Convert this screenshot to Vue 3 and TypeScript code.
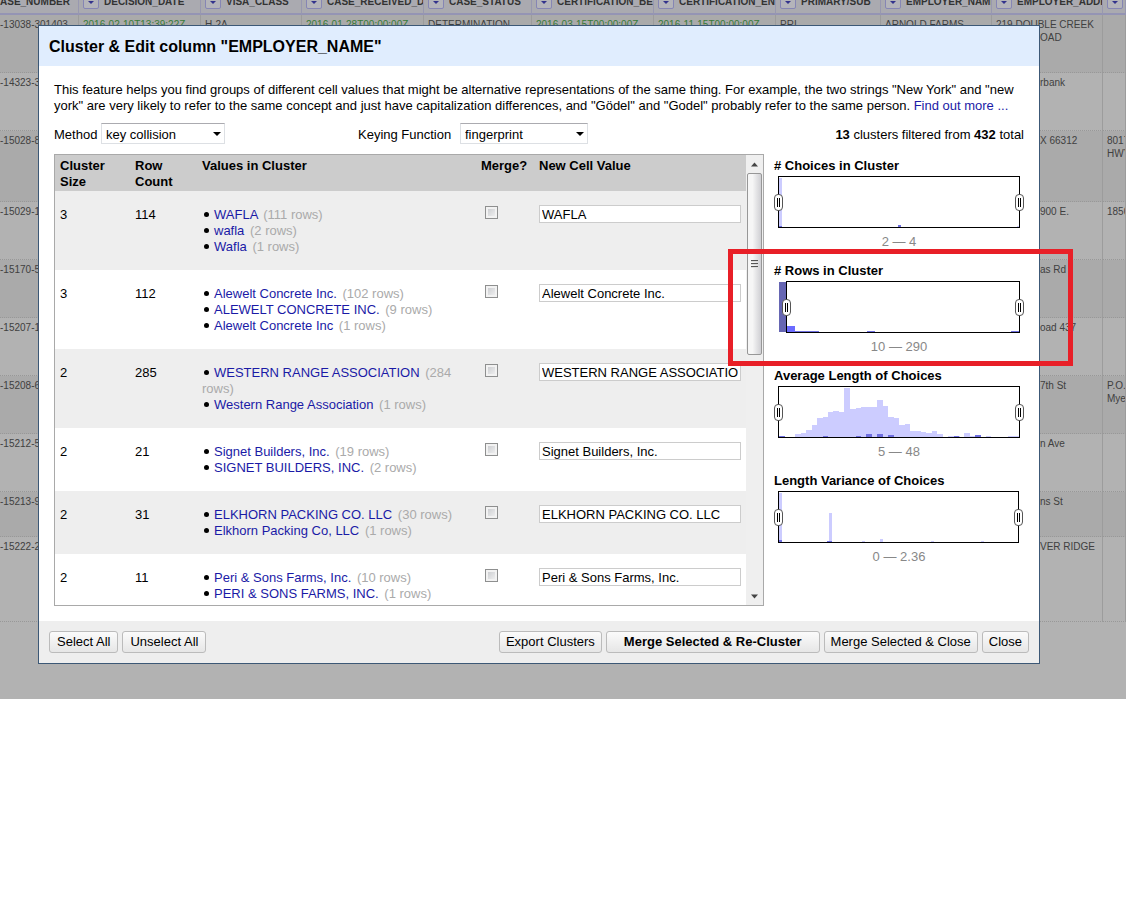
<script setup lang="ts">
import { ref } from 'vue'

interface GridColumn {
  name: string
  menu: boolean
}
interface GridRow {
  size: string
  cells: string[]
}
interface Choice {
  text: string
  rows: number
}
interface Cluster {
  count: number
  choices: Choice[]
  merge: boolean
  value: string
}
interface Bar {
  x: number
  w: number
  h: number
  tone: string
}
interface Facet {
  title: string
  range: string
  from: number
  to: number
  flagged: boolean
  bars: Bar[]
}

const columns: GridColumn[] = [
  { name: 'ASE_NUMBER', menu: false },
  { name: 'DECISION_DATE', menu: true },
  { name: 'VISA_CLASS', menu: true },
  { name: 'CASE_RECEIVED_DATE', menu: true },
  { name: 'CASE_STATUS', menu: true },
  { name: 'CERTIFICATION_BEGIN', menu: true },
  { name: 'CERTIFICATION_END', menu: true },
  { name: 'PRIMARY/SUB', menu: true },
  { name: 'EMPLOYER_NAME', menu: true },
  { name: 'EMPLOYER_ADDRESS', menu: true },
  { name: '', menu: true },
]

const blanks = (n: number): string[] => Array.from({ length: n }, () => '')
const gridRow = (size: string, id: string, address: string, extra = ''): GridRow => ({
  size,
  cells: [id, ...blanks(8), address, extra],
})

const gridRows: GridRow[] = [
  {
    size: 'mid',
    cells: [
      '-13038-301403',
      '2016-02-10T13:39:22Z',
      'H-2A',
      '2016-01-28T00:00:00Z',
      'DETERMINATION',
      '2016-03-15T00:00:00Z',
      '2016-11-15T00:00:00Z',
      'PRI',
      'ARNOLD FARMS',
      '219 DOUBLE CREEK\nOAD',
      '',
    ],
  },
  gridRow('mid', '-14323-3', 'rbank'),
  gridRow('tall', '-15028-8', 'X 66312', '8017\nHWY'),
  gridRow('mid', '-15029-1', '900 E.', '1850'),
  gridRow('mid', '-15170-5', 'as Rd'),
  gridRow('mid', '-15207-1', 'oad 437'),
  gridRow('mid', '-15208-6', '7th St', 'P.O.\nMye'),
  gridRow('mid', '-15212-5', 'n Ave'),
  gridRow('short', '-15213-9', 'ns St'),
  gridRow('last', '-15222-2', 'VER RIDGE'),
]

const isDate = (text: string): boolean => text.endsWith('Z')
const isTail = (col: number, line: string): boolean => col === 9 && !line.startsWith('219')

const cluster = (count: number, value: string, choices: [string, number][]): Cluster => ({
  count,
  value,
  merge: false,
  choices: choices.map(([text, rows]) => ({ text, rows })),
})

const clusters = ref<Cluster[]>([
  cluster(114, 'WAFLA', [['WAFLA', 111], ['wafla', 2], ['Wafla', 1]]),
  cluster(112, 'Alewelt Concrete Inc.', [
    ['Alewelt Concrete Inc.', 102],
    ['ALEWELT CONCRETE INC.', 9],
    ['Alewelt Concrete Inc', 1],
  ]),
  cluster(285, 'WESTERN RANGE ASSOCIATION', [
    ['WESTERN RANGE ASSOCIATION', 284],
    ['Western Range Association', 1],
  ]),
  cluster(21, 'Signet Builders, Inc.', [['Signet Builders, Inc.', 19], ['SIGNET BUILDERS, INC.', 2]]),
  cluster(31, 'ELKHORN PACKING CO. LLC', [['ELKHORN PACKING CO. LLC', 30], ['Elkhorn Packing Co, LLC', 1]]),
  cluster(11, 'Peri & Sons Farms, Inc.', [['Peri & Sons Farms, Inc.', 10], ['PERI & SONS FARMS, INC.', 1]]),
])

const bars = (tone: string, list: [number, number, number][]): Bar[] =>
  list.map(([x, w, h]) => ({ x, w, h, tone }))

const facets = ref<Facet[]>([
  {
    title: '# Choices in Cluster',
    range: '2 — 4',
    from: 0,
    to: 241,
    flagged: false,
    bars: [
      ...bars('light', [[5, 3, 49], [243, 2, 1]]),
      ...bars('dark', [[5, 3, 1], [124, 3, 2]]),
    ],
  },
  {
    title: '# Rows in Cluster',
    range: '10 — 290',
    from: 8,
    to: 241,
    flagged: true,
    bars: [
      ...bars('muted', [[5, 8, 50]]),
      ...bars('bright', [[13, 8, 6]]),
      ...bars('dark', [[21, 24, 1], [93, 8, 1], [237, 8, 1]]),
    ],
  },
  {
    title: 'Average Length of Choices',
    range: '5 — 48',
    from: 0,
    to: 241,
    flagged: false,
    bars: [
      ...bars('light', [
        [21, 6, 3], [27, 5, 4], [32, 6, 7], [38, 5, 12], [43, 6, 19], [49, 5, 20], [54, 5, 25],
        [59, 6, 26], [65, 5, 25], [70, 6, 49], [76, 6, 28], [82, 5, 29], [87, 16, 30], [103, 6, 37],
        [109, 5, 31], [114, 6, 20], [120, 5, 19], [125, 6, 12], [131, 5, 13], [136, 11, 6],
        [147, 5, 5], [152, 6, 4], [158, 5, 6], [163, 6, 3], [174, 12, 1], [190, 6, 4],
        [196, 5, 1], [201, 6, 2], [212, 5, 1], [234, 11, 1],
      ]),
      ...bars('dark', [
        [5, 6, 1], [49, 5, 1], [82, 5, 1], [92, 6, 3], [103, 6, 3], [114, 6, 2], [180, 5, 1], [201, 6, 2],
      ]),
    ],
  },
  {
    title: 'Length Variance of Choices',
    range: '0 — 2.36',
    from: 0,
    to: 240,
    flagged: false,
    bars: [
      ...bars('light', [[5, 3, 49], [55, 3, 29], [106, 3, 3], [88, 3, 1], [157, 3, 1], [207, 3, 1]]),
      ...bars('dark', [[5, 3, 2], [53, 5, 1]]),
    ],
  },
])

const setAll = (on: boolean): void => clusters.value.forEach((c) => (c.merge = on))
</script>

<template>
  <div class="stage">
    <div class="grid-view">
      <table class="grid">
        <colgroup>
          <col v-for="(c, i) in columns" :key="i" :class="'g' + i" />
        </colgroup>
        <thead>
          <tr>
            <th v-for="(c, i) in columns" :key="i" scope="col">
              <button v-if="c.menu" type="button" class="menu" :aria-label="'Menu ' + c.name"></button>{{ c.name }}
            </th>
          </tr>
        </thead>
        <tbody>
          <tr v-for="(r, i) in gridRows" :key="i" :class="r.size">
            <td v-for="(cell, j) in r.cells" :key="j" :class="{ date: isDate(cell) }">
              <div v-for="line in cell.split('\n')" :key="line" :class="{ tail: isTail(j, line) }">{{ line }}</div>
            </td>
          </tr>
        </tbody>
      </table>
    </div>

    <section class="dialog" role="dialog" aria-labelledby="dialog-title">
      <h1 id="dialog-title">Cluster &amp; Edit column "EMPLOYER_NAME"</h1>
      <div class="body">
        <p class="intro">
          This feature helps you find groups of different cell values that might be alternative representations of the
          same thing. For example, the two strings "New York" and "new york" are very likely to refer to the same
          concept and just have capitalization differences, and "Gödel" and "Godel" probably refer to the same person.
          <a href="#">Find out more ...</a>
        </p>

        <div class="controls">
          <div class="control first">
            <label for="method">Method</label>
            <span class="select"><select id="method" class="method"><option>key collision</option></select></span>
          </div>
          <div class="control">
            <label for="keying" class="wide">Keying Function</label>
            <span class="select"><select id="keying" class="keying"><option>fingerprint</option></select></span>
          </div>
          <div class="summary"><b>13</b> clusters filtered from <b>432</b> total</div>
        </div>

        <div class="main">
          <div class="list">
            <div class="viewport">
              <table class="clusters">
                <colgroup>
                  <col class="c-size" /><col class="c-count" /><col /><col class="c-merge" /><col class="c-value" />
                </colgroup>
                <thead>
                  <tr>
                    <th scope="col">Cluster<br />Size</th>
                    <th scope="col">Row<br />Count</th>
                    <th scope="col">Values in Cluster</th>
                    <th scope="col">Merge?</th>
                    <th scope="col">New Cell Value</th>
                  </tr>
                </thead>
                <tbody>
                  <tr v-for="(c, i) in clusters" :key="i">
                    <td>{{ c.choices.length }}</td>
                    <td>{{ c.count }}</td>
                    <td>
                      <ul>
                        <li v-for="choice in c.choices" :key="choice.text">
                          <a href="#">{{ choice.text }}</a>{{ ' ' }}<span class="rows">({{ choice.rows }} rows)</span>
                        </li>
                      </ul>
                    </td>
                    <td class="merge"><input v-model="c.merge" type="checkbox" :aria-label="'Merge ' + c.value" /></td>
                    <td class="value">
                      <input v-model="c.value" type="text" :aria-label="'New value, cluster ' + (i + 1)" />
                    </td>
                  </tr>
                </tbody>
              </table>
            </div>
            <div class="scrollbar" aria-hidden="true">
              <svg class="arrow" viewBox="0 0 15 17"><path d="M4 11 L7.500 7 L11 11 Z" fill="#444" /></svg>
              <div class="thumb"><i></i><i></i><i></i></div>
              <svg class="arrow bottom" viewBox="0 0 15 17"><path d="M4 7 L7.500 11 L11 7 Z" fill="#444" /></svg>
            </div>
          </div>

          <div class="facets">
            <div v-for="f in facets" :key="f.title" class="facet">
              <h2>{{ f.title }}</h2>
              <div class="chart">
                <svg viewBox="0 0 250 57" aria-hidden="true">
                  <rect
                    v-for="(b, k) in f.bars"
                    :key="k"
                    :x="b.x"
                    :y="53 - b.h"
                    :width="b.w"
                    :height="b.h"
                    :class="b.tone"
                  />
                  <rect class="frame" :x="f.from + 4.5" y="2.5" :width="f.to - f.from" height="51" />
                </svg>
                <input v-model.number="f.from" type="range" min="0" max="241" :aria-label="f.title + ', from'" />
                <input v-model.number="f.to" type="range" min="0" max="241" :aria-label="f.title + ', to'" />
              </div>
              <div class="range">{{ f.range }}</div>
              <div v-if="f.flagged" class="callout"></div>
            </div>
          </div>
        </div>
      </div>

      <footer>
        <button type="button" @click="setAll(true)">Select All</button>
        <button type="button" @click="setAll(false)">Unselect All</button>
        <span class="spacer"></span>
        <button type="button">Export Clusters</button>
        <button type="button" class="primary">Merge Selected &amp; Re-Cluster</button>
        <button type="button">Merge Selected &amp; Close</button>
        <button type="button">Close</button>
      </footer>
    </section>
  </div>
</template>

<style>
body {
  background: #fff;
}
</style>

<style scoped>
.stage {
  position: relative;
  display: flow-root;
  background: #b2b2b2;
  color: #000;
  font: 13px/16px "Liberation Sans", Arial, sans-serif;
}
.stage * {
  box-sizing: border-box;
}

/* data grid behind the dialog */
.grid-view {
  position: absolute;
  inset: 0;
  overflow: hidden;
}
.grid {
  width: 100%;
  margin-top: -12px;
  border-collapse: separate;
  border-spacing: 0;
  table-layout: fixed;
  color: #404040;
  font-size: 10px;
  line-height: 13px;
}
.g0 { width: 79px; }
.g1, .g3, .g5, .g6 { width: 122px; }
.g2 { width: 101px; }
.g4 { width: 108px; }
.g7 { width: 105px; }
.g8, .g9 { width: 111px; }
.grid th {
  height: 27px;
  padding: 2px 0 0 4px;
  overflow: hidden;
  background: #aaaab0;
  border-right: 1px solid #9898b0;
  border-bottom: 2px solid #9494b4;
  color: #333;
  text-align: left;
  vertical-align: middle;
  white-space: nowrap;
}
.grid th:first-child,
.grid td:first-child {
  padding-left: 0;
}
.menu {
  position: relative;
  width: 16px;
  height: 16px;
  margin: 0 5px 2px 0;
  padding: 0;
  vertical-align: middle;
  background: #b4b4ba;
  border: 1px solid #8686b4;
  border-radius: 2px;
}
.menu::after {
  content: "";
  position: absolute;
  top: 7px;
  left: 4px;
  border: 3px solid transparent;
  border-top-color: #33338c;
}
.grid td {
  padding: 3px 0 0 4px;
  overflow: hidden;
  background: #b2b2b2;
  border-right: 1px solid #9c9c9c;
  border-bottom: 1px dotted #989898;
  vertical-align: top;
  white-space: nowrap;
}
.grid tbody tr:nth-child(odd) td {
  background: #aaa;
}
.grid .date {
  color: #397a39;
}
.tail {
  padding-left: 44px;
}
.mid td { height: 58px; }
.tall td { height: 71px; }
.short td { height: 45px; }
.last td { height: 85px; }

/* dialog */
.dialog {
  position: relative;
  margin: 25px 86px 35px 38px;
  background: #fff;
  border: 1px solid #3c5876;
}
h1 {
  margin: 0;
  padding: 11px 10px 9px;
  background: #e0edfe;
  font-size: 16px;
  line-height: 20px;
}
.body {
  padding: 16px 15px 15px;
}
.intro {
  margin: 0;
}
a {
  color: #1a1aa6;
  text-decoration: none;
}
.controls {
  display: flex;
  align-items: center;
  margin: 9px 0 10px;
}
.control {
  display: flex;
  align-items: center;
}
.control.first {
  flex: 0 0 304px;
}
.control label {
  width: 47px;
  padding-top: 2px;
}
.control label.wide {
  width: 102px;
}
.select {
  position: relative;
}
.select::after {
  content: "";
  position: absolute;
  top: 9px;
  right: 4px;
  border: 4px solid transparent;
  border-top-color: #000;
  pointer-events: none;
}
select {
  display: block;
  height: 21px;
  padding: 2px 4px 0;
  appearance: none;
  background: #fff;
  border: 1px solid #dde0e4;
  border-top-color: #ababb0;
  border-radius: 0;
  color: #000;
  font: inherit;
}
.method { width: 124px; }
.keying { width: 128px; }
.summary {
  margin-left: auto;
  padding-top: 2px;
}
.main {
  display: flex;
  gap: 10px;
}
.list {
  display: flex;
  flex: 1;
  min-width: 0;
  height: 452px;
  border: 1px solid #a9a9a9;
}
.viewport {
  flex: 1;
  min-width: 0;
  overflow: hidden;
}
.clusters {
  width: 100%;
  border-collapse: collapse;
  table-layout: fixed;
}
.c-size { width: 75px; }
.c-count { width: 67px; }
.c-merge { width: 58px; }
.c-value { width: 212px; }
.clusters th {
  padding: 3px 0 1px 5px;
  background: #ccc;
  text-align: left;
  vertical-align: top;
  white-space: nowrap;
}
.clusters td {
  padding: 16px 5px 15px;
  vertical-align: top;
}
.clusters tbody tr:nth-child(odd) {
  background: #eee;
}
.clusters td.merge {
  padding-top: 15px;
}
.clusters td.value {
  padding-top: 14px;
  padding-bottom: 0;
}
ul {
  margin: 0;
  padding: 0;
  list-style: none;
}
li::before {
  content: "";
  display: inline-block;
  width: 5px;
  height: 5px;
  margin: 0 5px 2px 2px;
  background: #000;
  border-radius: 50%;
}
.rows {
  margin-left: 2px;
  color: #aaa;
}
input[type="checkbox"] {
  display: block;
  width: 13px;
  height: 13px;
  margin: 0 4px;
  appearance: none;
  background: linear-gradient(135deg, #c4c6ca, #f6f6f6);
  border: 1px solid #8e8f8f;
  box-shadow: inset 0 0 0 2px #f2f2f2;
}
input[type="checkbox"]:checked {
  background: #444;
}
input[type="text"] {
  display: block;
  width: 100%;
  height: 18px;
  padding: 0 2px;
  background: #fff;
  border: 1px solid #ccc;
  color: #000;
  font: inherit;
}
.scrollbar {
  display: flex;
  flex: 0 0 17px;
  flex-direction: column;
  padding: 0 1px;
  background: #efefef;
}
.arrow {
  width: 15px;
  height: 18px;
}
.arrow.bottom {
  margin-top: auto;
}
.thumb {
  display: flex;
  flex-direction: column;
  align-items: center;
  justify-content: center;
  gap: 1px;
  height: 182px;
  background: linear-gradient(90deg, #f6f6f6 35%, #cfcfd3);
  border: 1px solid #979797;
  border-radius: 2px;
}
.thumb i {
  width: 7px;
  height: 2px;
  background: #555;
  border-bottom: 1px solid #ddd;
}

/* facets */
.facets {
  flex: 0 0 250px;
  padding-top: 4px;
}
.facet {
  position: relative;
  height: 105px;
}
h2 {
  margin: 0;
  font-size: 13px;
  line-height: 16px;
}
.chart {
  position: relative;
  height: 57px;
}
.chart svg {
  display: block;
  width: 250px;
  height: 57px;
}
.light { fill: #ccf; }
.dark { fill: #6f6fe0; }
.bright { fill: #6b6bff; }
.muted { fill: #6666b3; }
.frame {
  fill: none;
  stroke: #000;
}
.chart input {
  position: absolute;
  top: 20px;
  left: 0;
  width: 250px;
  height: 17px;
  margin: 0;
  appearance: none;
  background: none;
  pointer-events: none;
}
.chart input::-webkit-slider-thumb {
  width: 9px;
  height: 17px;
  appearance: none;
  background:
    linear-gradient(#000, #000) 2px 3px / 1px 9px no-repeat,
    linear-gradient(#000, #000) 4px 3px / 1px 9px no-repeat,
    #fff;
  border: 1px solid #555;
  border-radius: 4px;
  pointer-events: auto;
}
.range {
  color: #888;
  text-align: center;
  line-height: 22px;
}
.callout {
  position: absolute;
  inset: -14px -49px 2px -46px;
  border: 5px solid #e81f27;
  pointer-events: none;
}

footer {
  display: flex;
  gap: 4px;
  padding: 10px;
  background: #eee;
}
footer button {
  height: 22px;
  padding: 0 6px;
  background: linear-gradient(#fbfbfb, #e6e6e6);
  border: 1px solid #bbb;
  border-radius: 3px;
  color: #000;
  font: inherit;
  white-space: nowrap;
}
footer button:nth-child(-n + 2) {
  padding: 0 7px;
}
footer .primary {
  padding: 0 17px;
  font-weight: bold;
}
.spacer {
  flex: 1;
}
</style>
